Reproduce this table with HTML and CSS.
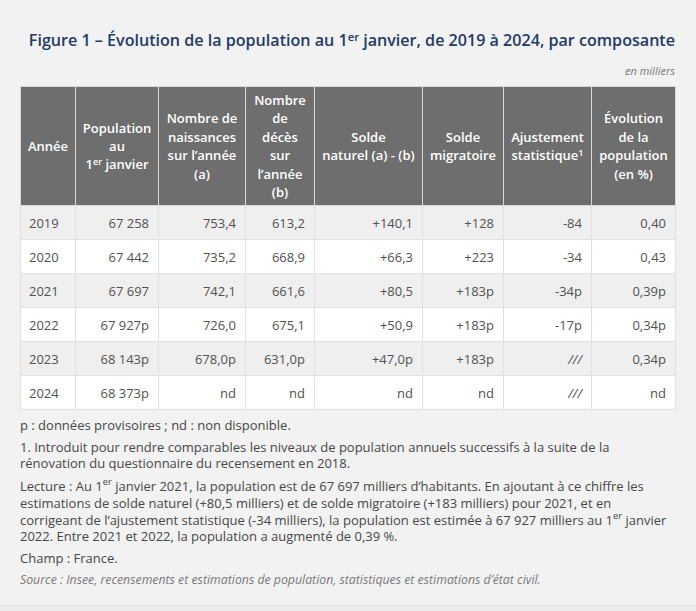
FILE: index.html
```html
<!DOCTYPE html>
<html lang="fr">
<head>
<meta charset="utf-8">
<link rel="stylesheet" href="styles.css">
</head>
<body>
<div class="page">
  <h1 class="title">Figure 1 – Évolution de la population au 1<sup>er</sup> janvier, de 2019 à 2024, par composante</h1>
  <p class="unit">en milliers</p>
  <table class="data">
    <colgroup>
      <col class="c1"><col class="c2"><col class="c3"><col class="c4"><col class="c5"><col class="c6"><col class="c7"><col class="c8">
    </colgroup>
    <thead>
      <tr>
        <th>Année</th>
        <th>Population<br>au<br>1<sup>er</sup> janvier</th>
        <th>Nombre de naissances sur l’année (a)</th>
        <th>Nombre<br>de<br>décès<br>sur<br>l’année<br>(b)</th>
        <th>Solde<br>naturel (a) - (b)</th>
        <th>Solde migratoire</th>
        <th>Ajustement statistique<sup>1</sup></th>
        <th>Évolution de la population (en %)</th>
      </tr>
    </thead>
    <tbody>
      <tr><td class="yr">2019</td><td>67 258</td><td>753,4</td><td>613,2</td><td>+140,1</td><td>+128</td><td>-84</td><td>0,40</td></tr>
      <tr><td class="yr">2020</td><td>67 442</td><td>735,2</td><td>668,9</td><td>+66,3</td><td>+223</td><td>-34</td><td>0,43</td></tr>
      <tr><td class="yr">2021</td><td>67 697</td><td>742,1</td><td>661,6</td><td>+80,5</td><td>+183p</td><td>-34p</td><td>0,39p</td></tr>
      <tr><td class="yr">2022</td><td>67 927p</td><td>726,0</td><td>675,1</td><td>+50,9</td><td>+183p</td><td>-17p</td><td>0,34p</td></tr>
      <tr><td class="yr">2023</td><td>68 143p</td><td>678,0p</td><td>631,0p</td><td>+47,0p</td><td>+183p</td><td class="it">///</td><td>0,34p</td></tr>
      <tr><td class="yr">2024</td><td>68 373p</td><td>nd</td><td>nd</td><td>nd</td><td>nd</td><td class="it">///</td><td>nd</td></tr>
    </tbody>
  </table>
  <div class="notes">
    <p>p : données provisoires ; nd : non disponible.</p>
    <p>1. Introduit pour rendre comparables les niveaux de population annuels successifs à la suite de la rénovation du questionnaire du recensement en 2018.</p>
    <p>Lecture : Au 1<sup>er</sup> janvier 2021, la population est de 67 697 milliers d’habitants. En ajoutant à ce chiffre les estimations de solde naturel (+80,5 milliers) et de solde migratoire (+183 milliers) pour 2021, et en corrigeant de l’ajustement statistique (-34 milliers), la population est estimée à 67 927 milliers au 1<sup>er</sup> janvier 2022. Entre 2021 et 2022, la population a augmenté de 0,39 %.</p>
    <p>Champ : France.</p>
    <p class="source">Source : Insee, recensements et estimations de population, statistiques et estimations d’état civil.</p>
  </div>
</div>
</body>
</html>
```
FILE: styles.css
```css
html, body {
  margin: 0;
  padding: 0;
  background: #ebebeb;
}
body {
  font-family: "Open Sans", "DejaVu Sans", sans-serif;
  color: #474747;
}
.page {
  background: #f2f2f2;
  height: 606px;
  border-bottom: 1px solid #e2e2e2;
  box-sizing: border-box;
  padding: 29px 21px 0 20px;
}
.title {
  margin: 0;
  font-size: 16.1px;
  font-weight: 600;
  line-height: 22px;
  color: #233a68;
  text-align: right;
  white-space: nowrap;
}
.title sup, th sup {
  font-size: 0.7em;
  line-height: 0;
  vertical-align: 0.45em;
}
.unit {
  margin: 12px 0 0;
  font-size: 11px;
  line-height: 15px;
  font-style: italic;
  color: #777;
  text-align: right;
}
.data {
  margin-top: 8px;
  width: 655px;
  table-layout: fixed;
  border-collapse: collapse;
  font-size: 13px;
}
.c1 { width: 55px; }
.c2 { width: 83px; }
.c3 { width: 87px; }
.c4 { width: 69px; }
.c5 { width: 108px; }
.c6 { width: 81px; }
.c7 { width: 88px; }
.c8 { width: 84px; }
.data th {
  background: #6e6e6e;
  color: #fff;
  font-weight: 600;
  line-height: 18.4px;
  padding: 4px 6px;
  height: 119px;
  box-sizing: border-box;
  text-align: center;
  vertical-align: middle;
  border: 1px solid #d8d8d8;
}
.data td {
  height: 34px;
  padding: 0 9px;
  box-sizing: border-box;
  text-align: right;
  vertical-align: middle;
  border: 1px solid #e0e0e0;
  color: #525252;
  line-height: 18px;
}
.data td.yr { text-align: left; padding-left: 8px; }
.data td.it { font-style: italic; }
.data tbody tr:nth-child(odd) td { background: #efefef; }
.data tbody tr:nth-child(even) td { background: #ffffff; }
.notes {
  margin-top: 7px;
  font-size: 13px;
  line-height: 16px;
  color: #474747;
}
.notes p {
  margin: 0 0 6px;
}
.notes sup {
  font-size: 0.72em;
  line-height: 1;
  vertical-align: 0.65em;
}
.notes .source {
  font-size: 12.3px;
  font-style: italic;
  color: #7a7a7a;
  margin-top: 6px;
}
```
